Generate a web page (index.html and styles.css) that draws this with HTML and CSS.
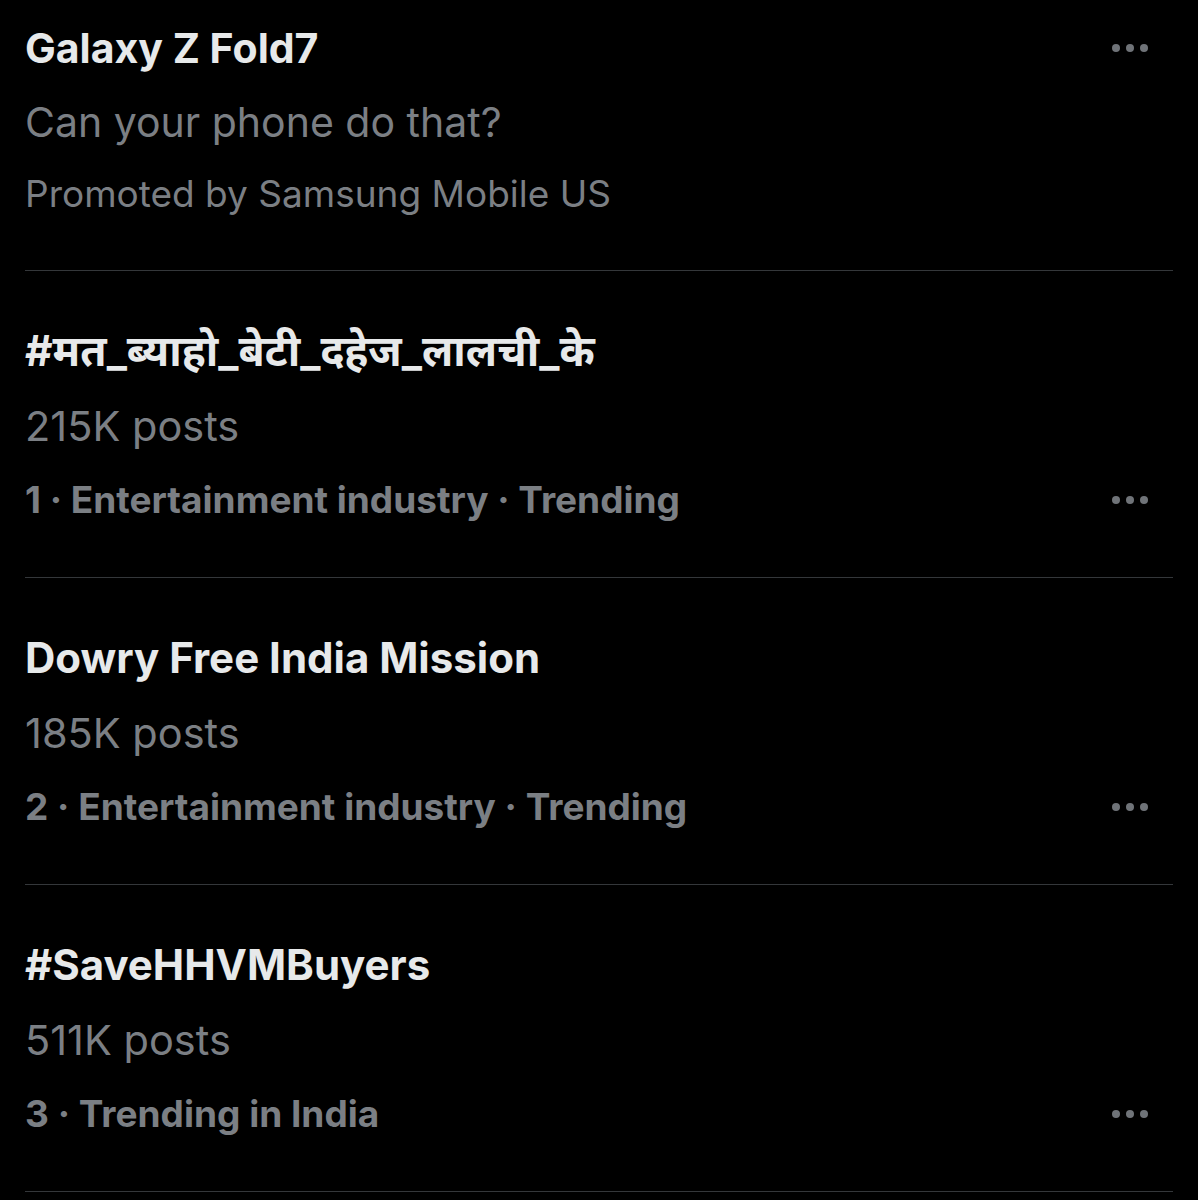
FILE: index.html
```html
<!DOCTYPE html>
<html lang="en">
  <head>
    <meta charset="UTF-8" />
    <meta name="viewport" content="width=device-width, initial-scale=1.0" />
    <title>Trending</title>
    <link rel="stylesheet" href="styles.css">
  </head>
  <body>
    <div class="list">
      <div class="item promo">
        <div class="line">
          <div class="title">Galaxy Z Fold7</div>
          <div class="more"><span></span><span></span><span></span></div>
        </div>
        <div class="tagline">Can your phone do that?</div>
        <div class="promoted">Promoted by Samsung Mobile US</div>
      </div>

      <div class="item">
        <div class="title hindi">#मत_ब्याहो_बेटी_दहेज_लालची_के</div>
        <div class="posts">215K posts</div>
        <div class="line">
          <div class="meta">1 · Entertainment industry · Trending</div>
          <div class="more"><span></span><span></span><span></span></div>
        </div>
      </div>

      <div class="item">
        <div class="title">Dowry Free India Mission</div>
        <div class="posts">185K posts</div>
        <div class="line">
          <div class="meta">2 · Entertainment industry · Trending</div>
          <div class="more"><span></span><span></span><span></span></div>
        </div>
      </div>

      <div class="item">
        <div class="title">#SaveHHVMBuyers</div>
        <div class="posts">511K posts</div>
        <div class="line">
          <div class="meta">3 · Trending in India</div>
          <div class="more"><span></span><span></span><span></span></div>
        </div>
      </div>
    </div>
  </body>
</html>
```
FILE: styles.css
```css
body {
  margin: 0;
  background: #000;
  font-family: "Inter", "Noto Sans", sans-serif;
  color: #e7e9ea;
}

.list {
  margin: 0 25px;
}

.item {
  padding: 55px 25px 52px 0;
  border-bottom: 1px solid #34373a;
}

.item.promo {
  padding-top: 23px;
  padding-bottom: 51px;
}

.line {
  display: flex;
  align-items: center;
  justify-content: space-between;
}

.title {
  font-size: 42px;
  font-weight: 700;
  line-height: 50px;
  margin-bottom: 25px;
}

.promo .title {
  font-size: 41px;
  margin-bottom: 0;
}

.promo .line {
  margin-bottom: 24px;
}

.title.hindi {
  font-size: 42.5px;
}

.tagline {
  font-size: 41px;
  line-height: 50px;
  color: #7b7f84;
  margin-bottom: 22px;
}

.promoted {
  font-size: 37px;
  line-height: 50px;
  color: #7b7f84;
}

.posts {
  font-size: 41.5px;
  line-height: 50px;
  color: #7b7f84;
  margin-bottom: 24px;
}

.meta {
  font-size: 37px;
  font-weight: 700;
  line-height: 50px;
  color: #7b7f84;
}

.more {
  display: flex;
  gap: 6px;
}

.more span {
  width: 8px;
  height: 8px;
  border-radius: 50%;
  background: #6f7378;
}
```
